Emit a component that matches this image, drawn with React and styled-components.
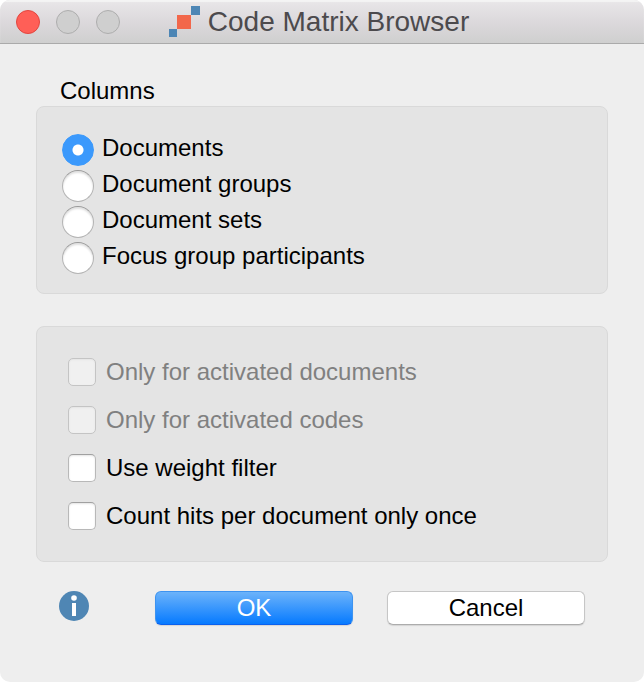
import React, { useState } from "react";
import styled, { createGlobalStyle } from "styled-components";

const columnOptions = [
  { id: "documents", label: "Documents" },
  { id: "groups", label: "Document groups" },
  { id: "sets", label: "Document sets" },
  { id: "focus", label: "Focus group participants" },
];

const filterOptions = [
  { id: "activatedDocuments", label: "Only for activated documents", disabled: true },
  { id: "activatedCodes", label: "Only for activated codes", disabled: true },
  { id: "weightFilter", label: "Use weight filter" },
  { id: "countOnce", label: "Count hits per document only once" },
];

const Logo = () => (
  <svg width="31" height="31" viewBox="0 0 31 31" aria-hidden="true">
    <rect x="22" y="0" width="9" height="9" fill="#4d86b5" />
    <rect x="8" y="9" width="14" height="14" fill="#f2674b" />
    <rect x="0" y="23" width="8" height="8" fill="#4d86b5" />
  </svg>
);

const InfoIcon = () => (
  <svg width="30" height="30" viewBox="0 0 30 30" aria-hidden="true">
    <circle cx="15" cy="15" r="15" fill="#4f86b4" />
    <circle cx="15" cy="7" r="2.8" fill="#fff" />
    <rect x="13" y="12" width="4" height="13" fill="#fff" />
  </svg>
);

const App = () => {
  const [column, setColumn] = useState("documents");
  const [filters, setFilters] = useState({});

  const toggleFilter = (id) => {
    setFilters({ ...filters, [id]: !filters[id] });
  };

  return (
    <>
      <GlobalStyle />
      <Window>
        <TitleBar>
          <WindowControls>
            <ControlButton type="button" aria-label="Close" $active />
            <ControlButton type="button" aria-label="Minimize" />
            <ControlButton type="button" aria-label="Zoom" />
          </WindowControls>
          <Title>
            <Logo />
            Code Matrix Browser
          </Title>
        </TitleBar>
        <Content>
          <Group>
            <GroupTitle>Columns</GroupTitle>
            <RadioPanel>
              {columnOptions.map((option) => (
                <RadioRow key={option.id}>
                  <Radio
                    name="columns"
                    value={option.id}
                    checked={column === option.id}
                    onChange={() => setColumn(option.id)}
                  />
                  {option.label}
                </RadioRow>
              ))}
            </RadioPanel>
          </Group>
          <CheckPanel>
            {filterOptions.map((option) => (
              <CheckRow key={option.id} $disabled={option.disabled}>
                <Checkbox
                  disabled={option.disabled}
                  checked={!!filters[option.id]}
                  onChange={() => toggleFilter(option.id)}
                />
                {option.label}
              </CheckRow>
            ))}
          </CheckPanel>
          <Footer>
            <InfoButton type="button" aria-label="Info">
              <InfoIcon />
            </InfoButton>
            <Actions>
              <Button type="button" $primary>
                OK
              </Button>
              <Button type="button">Cancel</Button>
            </Actions>
          </Footer>
        </Content>
      </Window>
    </>
  );
};

const GlobalStyle = createGlobalStyle`
  * {
    box-sizing: border-box;
  }
  body {
    margin: 0;
    background-color: #fff;
    color: #000;
    font-family: "Liberation Sans", Arial, sans-serif;
    font-size: 24px;
  }
  button, input {
    margin: 0;
    padding: 0;
    font: inherit;
  }
`;

const Window = styled.main`
  min-height: 100vh;
  background-color: #eee;
  border-radius: 10px;
  overflow: hidden;
`;

const TitleBar = styled.header`
  height: 44px;
  padding: 0 16px;
  display: grid;
  grid-template-columns: 1fr auto 1fr;
  align-items: center;
  background: linear-gradient(#e9e7e9, #dcd9dc 50%, #cfcfcf);
  border-bottom: 1px solid #aaa;
  box-shadow: inset 0 2px 1px #f4f4f4;
`;

const WindowControls = styled.div`
  display: flex;
  gap: 16px;
`;

const ControlButton = styled.button`
  width: 24px;
  height: 24px;
  border: 1px solid ${(props) => (props.$active ? "#e2463f" : "#adadad")};
  border-radius: 50%;
  background-color: ${(props) => (props.$active ? "#ff5f57" : "#cfcfcf")};
`;

const Title = styled.h1`
  margin: 0;
  padding-right: 6px;
  display: flex;
  align-items: center;
  gap: 8px;
  color: #4c4a4d;
  font-size: 28px;
  font-weight: normal;
`;

const Content = styled.div`
  padding: 32px 36px;
`;

const Group = styled.fieldset`
  min-width: 0;
  margin: 0 0 32px;
  padding: 0;
  border: none;
`;

const GroupTitle = styled.legend`
  padding: 0 24px;
  line-height: 30px;
`;

const Panel = styled.div`
  background-color: #e4e4e4;
  border: 1px solid #d9d9d9;
  border-radius: 8px;
`;

const RadioPanel = styled(Panel)`
  padding: 25px;
  padding-bottom: 17px;
`;

const CheckPanel = styled(Panel)`
  padding: 21px 31px;
`;

const RadioRow = styled.label`
  height: 36px;
  display: flex;
  gap: 8px;
  line-height: 32px;
`;

const Radio = styled.input.attrs({ type: "radio" })`
  appearance: none;
  flex: none;
  width: 32px;
  height: 32px;
  margin-top: 2px;
  border: 1px solid #b4b4b4;
  border-top-color: #999;
  border-radius: 50%;
  background-color: #fff;
  box-shadow: inset 0 2px 2px #e0e0e0;

  &:checked {
    border-color: #3b99fc;
    background: radial-gradient(circle, #fff 5px, #3b99fc 6px);
    box-shadow: none;
  }
`;

const CheckRow = styled.label`
  height: 48px;
  display: flex;
  align-items: center;
  gap: 10px;
  color: ${(props) => (props.$disabled ? "#808080" : "#000")};
`;

const Checkbox = styled.input.attrs({ type: "checkbox" })`
  appearance: none;
  flex: none;
  width: 28px;
  height: 28px;
  border: 1px solid #b8b8b8;
  border-top-color: #a0a0a0;
  border-radius: 5px;
  background-color: #fff;
  box-shadow: inset 0 1px 2px #e4e4e4;

  &:checked {
    background-color: #3b99fc;
  }

  &:disabled {
    border-color: #c4c4c4;
    background-color: #f0f0f0;
  }
`;

const Footer = styled.footer`
  padding: 29px 23px 0;
  display: flex;
  gap: 66px;
`;

const InfoButton = styled.button`
  height: 30px;
  border: none;
  background: none;
  line-height: 0;
`;

const Actions = styled.div`
  flex: 1;
  display: flex;
  gap: 34px;
`;

const Button = styled.button`
  flex: 1;
  height: 34px;
  border: 1px solid ${(props) => (props.$primary ? "#3d93f0" : "#c6c6c6")};
  border-bottom-color: ${(props) => (props.$primary ? "#0a60ee" : "#acacac")};
  border-radius: 6px;
  background: ${(props) =>
    props.$primary ? "linear-gradient(#6cb3fa, #067aff)" : "#fff"};
  box-shadow: 0 1px 1px #d4d4d4;
  color: ${(props) => (props.$primary ? "#fff" : "#000")};
  line-height: 30px;
`;

export default App;
